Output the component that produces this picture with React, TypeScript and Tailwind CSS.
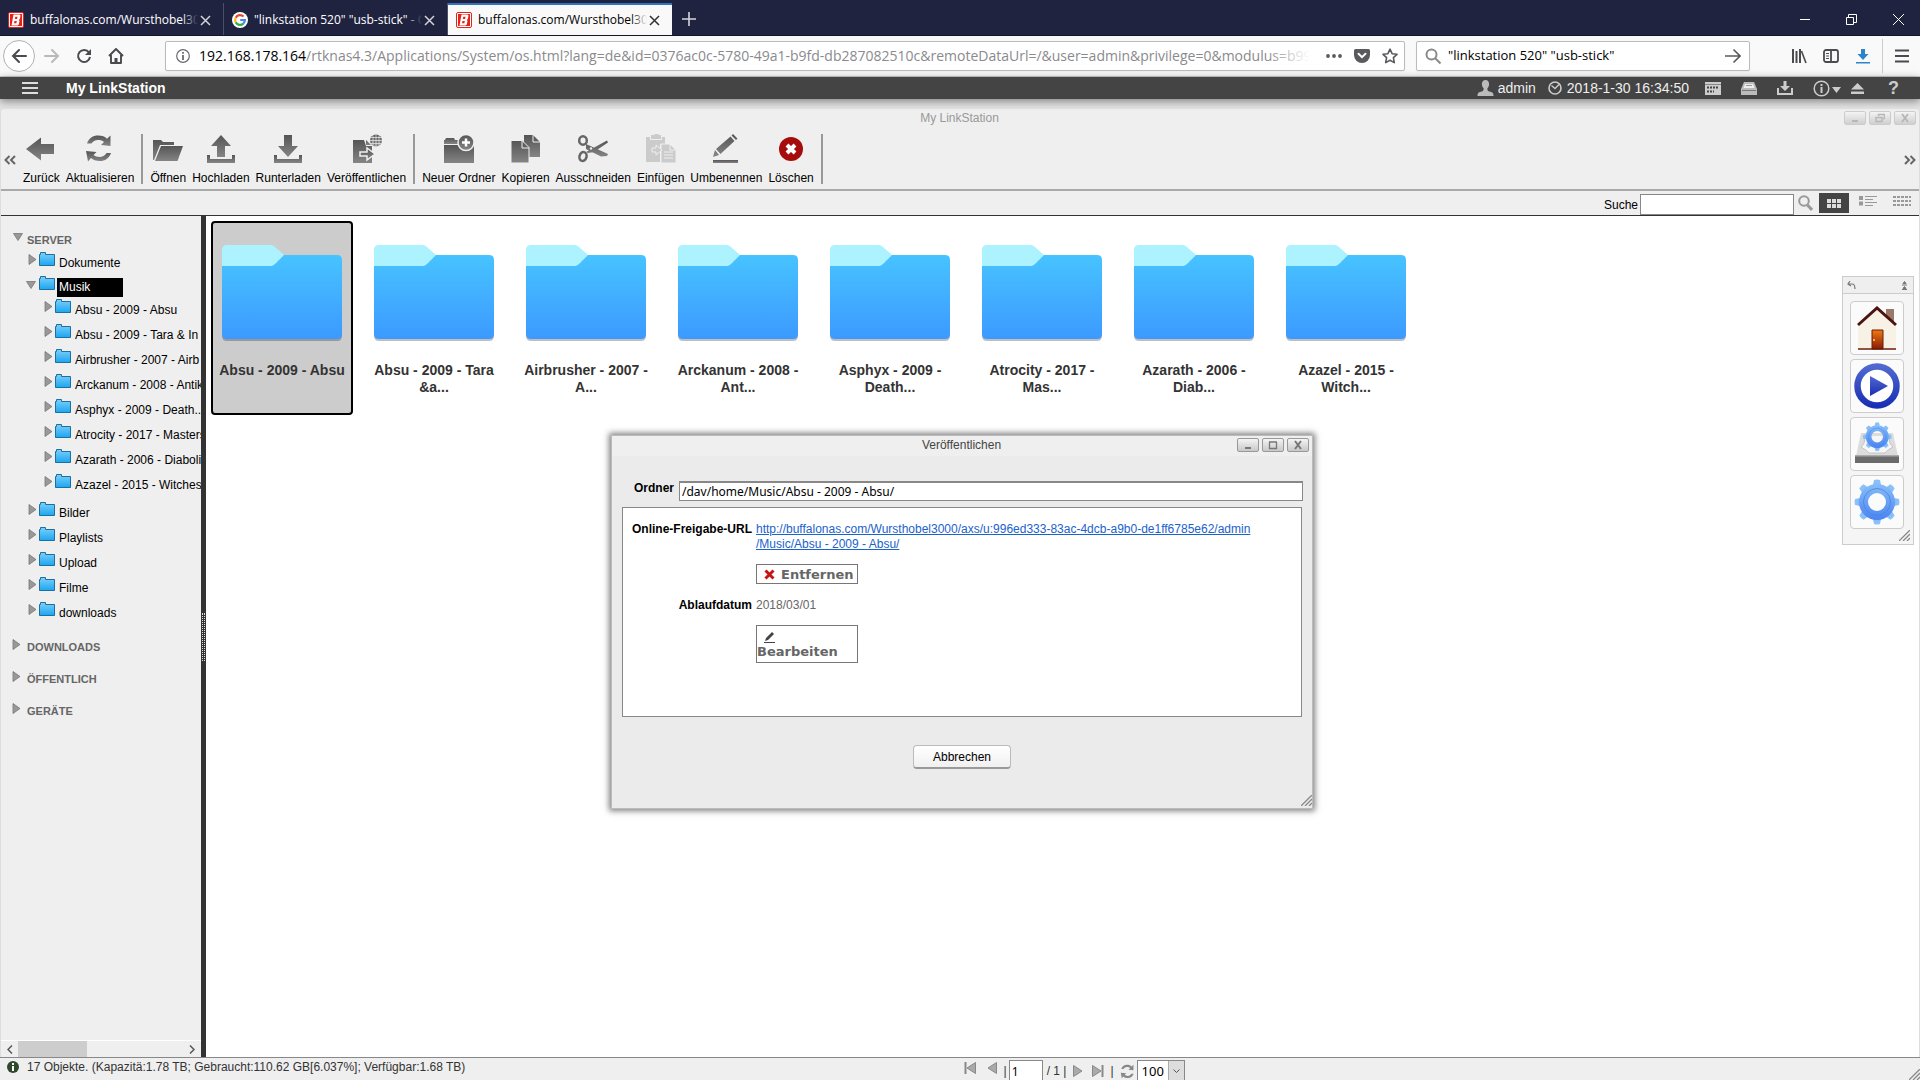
import { useState } from 'react'
import type { ReactNode } from 'react'
import { clsx } from 'clsx'

const URL_HOST = '192.168.178.164'
const URL_PATH = '/rtknas4.3/Applications/System/os.html?lang=de&id=0376ac0c-5780-49a1-b9fd-db287082510c&remoteDataUrl=/&user=admin&privilege=0&modulus=b992'

const ORDNER = [
  ['Absu - 2009 - Absu'],
  ['Absu - 2009 - Tara', '&a...'],
  ['Airbrusher - 2007 -', 'A...'],
  ['Arckanum - 2008 -', 'Ant...'],
  ['Asphyx - 2009 -', 'Death...'],
  ['Atrocity - 2017 -', 'Mas...'],
  ['Azarath - 2006 -', 'Diab...'],
  ['Azazel - 2015 -', 'Witch...'],
]

const MUSIK = [
  'Absu - 2009 - Absu',
  'Absu - 2009 - Tara & In',
  'Airbrusher - 2007 - Airb',
  'Arckanum - 2008 - Antik',
  'Asphyx - 2009 - Death...',
  'Atrocity - 2017 - Masters',
  'Azarath - 2006 - Diaboli',
  'Azazel - 2015 - Witches',
]

const FREIGABEN = ['Bilder', 'Playlists', 'Upload', 'Filme', 'downloads']

/* ---------- Browser ---------- */

function BuffaloIcon() {
  return (
    <svg width="16" height="16" viewBox="0 0 16 16" className="shrink-0">
      <rect x="0.5" y="0.5" width="15" height="15" rx="1.5" fill="#fff" stroke="#e2231a"/>
      <rect x="2" y="2" width="12" height="12" fill="#e2231a"/>
      <path d="M5.500 2.500h6l1 1-.7 3.500-1 1 .7 1-.7 3.500-1.300 1H3.500z" fill="#fff"/>
      <path d="M7.300 4.800h2.200l-.4 2.200H6.900zM6.500 9h2.300l-.4 2.300H6z" fill="#e2231a"/>
    </svg>
  )
}

function GoogleIcon() {
  return (
    <svg width="16" height="16" viewBox="0 0 16 16" className="shrink-0">
      <circle cx="8" cy="8" r="8" fill="#fff"/>
      <g fill="none" strokeWidth="2.200">
        <path d="M11.500 4.600A4.900 4.900 0 0 0 3.700 5.700" stroke="#ea4335"/>
        <path d="M3.700 5.700a4.900 4.900 0 0 0 0 4.600" stroke="#fbbc05"/>
        <path d="M3.700 10.300a4.900 4.900 0 0 0 7.600 1.300" stroke="#34a853"/>
        <path d="M11.300 11.600A4.900 4.900 0 0 0 12.900 8H8.200" stroke="#4285f4"/>
      </g>
    </svg>
  )
}

function BrowserTab({ icon, title, active }: { icon: ReactNode; title: string; active?: boolean }) {
  return (
    <div className={clsx('flex items-center w-56 pl-2 pr-2.5',
      active ? 'bg-[#f9f9fa] text-black border-t-2 border-[#2f74c0]' : 'pt-0.5 text-white border-r border-[#4d4f66]')}>
      {icon}
      <span className="relative flex-1 min-w-0 ml-1.5 overflow-hidden whitespace-nowrap text-xs leading-5">
        {title}
        <span className={clsx('absolute inset-y-0 right-0 w-4 bg-linear-to-r from-transparent', active ? 'to-[#f9f9fa]' : 'to-[#202340]')}/>
      </span>
      <button aria-label="Tab schließen" className="p-0.5">
        <svg width="11" height="11" viewBox="0 0 11 11" stroke="currentColor" strokeWidth="1.500" opacity=".8"><path d="M1 1l9 9M10 1l-9 9"/></svg>
      </button>
    </div>
  )
}

function BrowserTabs() {
  return (
    <div className="flex items-stretch h-9 pt-[3px] bg-[#202340] border-b border-[#13152c] shrink-0">
      <BrowserTab icon={<BuffaloIcon/>} title="buffalonas.com/Wursthobel300"/>
      <BrowserTab icon={<GoogleIcon/>} title={'"linkstation 520" "usb-stick" - G'}/>
      <BrowserTab icon={<BuffaloIcon/>} title="buffalonas.com/Wursthobel300" active/>
      <button aria-label="Neuer Tab" className="px-2.5">
        <svg width="14" height="14" viewBox="0 0 14 14" stroke="#d5d5dc" strokeWidth="1.600"><path d="M7 0v14M0 7h14"/></svg>
      </button>
      <div className="ml-auto flex items-center gap-9 pr-4 text-white">
        <button aria-label="Minimieren"><svg width="10" height="10" stroke="currentColor"><path d="M0 5.500h10"/></svg></button>
        <button aria-label="Verkleinern">
          <svg width="11" height="11" fill="none" stroke="currentColor"><path d="M.5 3.500h7v7h-7zM2.500 3.500v-3h8v8h-3"/></svg>
        </button>
        <button aria-label="Schließen"><svg width="11" height="11" stroke="currentColor"><path d="M0 0l11 11M11 0L0 11"/></svg></button>
      </div>
    </div>
  )
}

function BrowserBar() {
  return (
    <div className="flex items-center h-[41px] pl-[3px] pr-2.5 bg-[#f9f9fa] border-b border-[#ccc] shrink-0 text-[#4a4a4f]">
      <button aria-label="Zurück" className="w-8 h-8 rounded-full border border-[#b1b1b3] bg-white flex items-center justify-center">
        <svg width="16" height="16" viewBox="0 0 16 16" fill="none" stroke="currentColor" strokeWidth="2" strokeLinecap="round"><path d="M15 8H2M8 2L2 8l6 6"/></svg>
      </button>
      <button aria-label="Vor" className="ml-[9px]">
        <svg width="16" height="16" viewBox="0 0 16 16" fill="none" stroke="#b9b9bb" strokeWidth="2" strokeLinecap="round"><path d="M1 8h13M8 2l6 6-6 6"/></svg>
      </button>
      <button aria-label="Neu laden" className="ml-4">
        <svg width="16" height="16" viewBox="0 0 16 16" fill="none" stroke="currentColor" strokeWidth="2"><path d="M13 4.500A6 6 0 1 0 14 9"/><path d="M15 1v6H9z" fill="currentColor" stroke="none"/></svg>
      </button>
      <button aria-label="Startseite" className="ml-4">
        <svg width="16" height="16" viewBox="0 0 16 16" fill="none" stroke="currentColor" strokeWidth="1.900" strokeLinejoin="round"><path d="M1 8l7-7 7 7M3 7v8h10V7"/><path d="M6.500 10h3v5h-3z" fill="currentColor" stroke="none"/></svg>
      </button>

      <div className="ml-[41px] flex flex-1 min-w-0 items-center h-[30px] pl-2.5 pr-1.5 bg-white border border-[#bbb] rounded-xs shadow-xs">
        <svg width="14" height="14" viewBox="0 0 14 14" fill="none" stroke="#6a6a6e" className="shrink-0"><circle cx="7" cy="7" r="6.300" strokeWidth="1.200"/><path d="M7 6v5M7 3v1.700" strokeWidth="1.800"/></svg>
        <div className="relative ml-[9px] mr-4 flex-1 min-w-0 overflow-hidden whitespace-nowrap text-sm text-[#8a8a8d]">
          <span className="text-black">{URL_HOST}</span>{URL_PATH}
          <span className="absolute inset-y-0 right-0 w-11 bg-linear-to-r from-transparent to-white"/>
        </div>
        <div className="flex items-center gap-3 shrink-0">
          <svg width="16" height="16" viewBox="0 0 16 16" fill="#5a5a5e"><circle cx="2" cy="8" r="1.900"/><circle cx="8" cy="8" r="1.900"/><circle cx="14" cy="8" r="1.900"/></svg>
          <svg width="16" height="16" viewBox="0 0 16 16"><path d="M1.500 1h13q1.500 0 1.500 1.500V7a8 8 0 0 1-16 0V2.500Q0 1 1.500 1z" fill="#5a5a5e"/><path d="M4.500 5.800L8 9.200l3.500-3.400" fill="none" stroke="#fff" strokeWidth="2" strokeLinecap="round"/></svg>
          <svg width="16" height="16" viewBox="0 0 16 16" fill="none" stroke="#5a5a5e" strokeWidth="1.600" strokeLinejoin="round"><path d="M8 1.200l2.100 4.500 4.900.6-3.600 3.400.9 4.900L8 12.200l-4.300 2.400.9-4.900L1 6.300l4.900-.6z"/></svg>
        </div>
      </div>

      <div className="ml-[11px] flex w-[334px] items-center h-[30px] px-2 bg-white border border-[#bbb] rounded-xs shadow-xs">
        <svg width="16" height="16" viewBox="0 0 16 16" fill="none" stroke="#8a8a8d" strokeWidth="2" className="shrink-0"><circle cx="6.500" cy="6.500" r="5"/><path d="M10 10l5.500 5.500"/></svg>
        <input aria-label="Websuche" defaultValue={'"linkstation 520" "usb-stick"'} className="ml-[7px] flex-1 min-w-0 text-[13px] text-black outline-none"/>
        <svg width="16" height="16" viewBox="0 0 16 16" fill="none" stroke="#5a5a5e" strokeWidth="1.600"><path d="M0 8h15M8.500 1.500L15 8l-6.500 6.500"/></svg>
      </div>

      <div className="ml-[41px] flex items-center gap-4">
        <svg width="16" height="16" viewBox="0 0 16 16" fill="none" stroke="currentColor" strokeWidth="2"><path d="M2 1v14M5.500 3v12M9 1v14"/><path d="M10.500 3L15 15" strokeWidth="1.600"/></svg>
        <svg width="16" height="16" viewBox="0 0 16 16" fill="none" stroke="currentColor" strokeWidth="1.800"><rect x="1" y="2" width="14" height="12" rx="2"/><path d="M8 2v12"/><path d="M3 5.500h3M3 8h3M3 10.500h3" strokeWidth="1"/></svg>
        <svg width="16" height="16" viewBox="0 0 16 16" fill="#2d84c8"><path d="M6 1h4v5h3.500L8 12 2.500 6H6zM1 14h14v1.500H1z"/></svg>
        <svg width="28" height="34" viewBox="0 0 28 34" fill="none" className="-ml-[5px]"><path d="M.5 0v34" stroke="#ccc"/><path d="M13 11.500h14M13 17h14M13 22.500h14" stroke="#4a4a4f" strokeWidth="2"/></svg>
      </div>
    </div>
  )
}

/* ---------- Kopfzeile der NAS ---------- */

function SystemBar() {
  return (
    <header className="relative z-10 flex items-center h-[22px] pl-[22px] pr-[21px] bg-[#444] text-[#e8e8e8] text-sm leading-5 shrink-0 shadow-[0_2px_8px_rgba(0,0,0,0.45)]">
      <button aria-label="Menü"><svg width="16" height="12" stroke="#ddd" strokeWidth="2"><path d="M0 1h16M0 6h16M0 11h16"/></svg></button>
      <h1 className="ml-7 font-bold text-white">My LinkStation</h1>
      <div className="ml-auto flex items-center text-[#eee]">
        <svg width="17" height="16" viewBox="0 0 17 16" fill="#bbb"><path d="M8.500 0c2.400 0 3.600 1.700 3.600 4s-1 3.600-1.800 4.500c0 2.500 1 2.800 3.700 3.500 2 .5 2.500 1.500 2.500 4H.5c0-2.500.5-3.500 2.500-4 2.700-.7 3.700-1 3.700-3.500C5.900 7.600 4.900 6.300 4.900 4S6.100 0 8.500 0z"/></svg>
        <span className="ml-1">admin</span>
        <svg width="14" height="14" viewBox="0 0 14 14" fill="none" stroke="#ccc" strokeWidth="1.600" className="ml-3"><circle cx="7" cy="7" r="6"/><path d="M3.500 4.500L7 7.500 11 3.500" strokeWidth="1.400"/></svg>
        <span className="ml-[5px]">2018-1-30 16:34:50</span>
        <svg width="16" height="13" viewBox="0 0 16 13" className="ml-4"><path d="M0 0h16v13H0z" fill="#ccc"/><path d="M0 2.500h16" stroke="#888"/><path d="M2 5.500h12M2 9.500h7" stroke="#444" strokeWidth="2" strokeDasharray="2 1"/></svg>
        <svg width="16" height="13" viewBox="0 0 16 13" className="ml-5"><path d="M3 0h10l3 7v6H0V7z" fill="#bbb"/><path d="M4 2h8l1.500 4h-11z" fill="#eee"/><path d="M1 8.500h14" stroke="#777"/><path d="M5 3.500h6" stroke="#999"/></svg>
        <svg width="16" height="14" viewBox="0 0 16 14" className="ml-5" fill="#ccc"><path d="M6.500 0h3v5H13L8 10 3 5h3.500zM0 7h2v5h12V7h2v7H0z"/></svg>
        <svg width="17" height="17" viewBox="0 0 17 17" fill="none" stroke="#ccc" className="ml-5"><circle cx="8.500" cy="8.500" r="7.300" strokeWidth="1.500"/><path d="M8.500 7v6M8.500 4v2" strokeWidth="2"/></svg>
        <svg width="9" height="6" className="ml-0.5 mt-1" fill="#ccc"><path d="M0 0h9L4.500 6z"/></svg>
        <svg width="13" height="11" viewBox="0 0 13 11" fill="#ccc" className="ml-2.5"><path d="M6.500 0L13 6.500H0zM0 8.500h13V11H0z"/></svg>
        <span className="ml-6 text-lg font-bold text-[#ccc]">?</span>
      </div>
    </header>
  )
}

/* ---------- Symbolleiste ---------- */

function ToolIcon({ children, fill = 'url(#toolGrad)' }: { children: ReactNode; fill?: string }) {
  return <svg width="30" height="30" viewBox="0 0 30 30" fill={fill} className="shrink-0">{children}</svg>
}

function RefreshShape() {
  return (
    <>
      <path d="M2 9.500C4 4 8 1.500 13 1.500c4 0 7 1 9 3.200L25.500 1.500V12L16 11l3-3c-1.500-1.500-3.500-2-6-2-3 0-5 1.500-6.500 3.500z"/>
      <path d="M26 19c-2 5.500-6 8-11 8-4 0-7-1-9-3L3 27.500 1 17l10.500 1-3 3c1.500 1.300 3.500 2 6 2 3 0 5.500-1.500 7-4z"/>
    </>
  )
}

const WERKZEUGE: { label: string; icon: ReactNode; disabled?: boolean }[][] = [
  [
    { label: 'Zurück', icon: <ToolIcon><path d="M0 15L15 3.500V10h13v10H15v6.500z"/></ToolIcon> },
    { label: 'Aktualisieren', icon: <ToolIcon><RefreshShape/></ToolIcon> },
  ],
  [
    { label: 'Öffnen', icon: <ToolIcon><path d="M0 6h8l2 2h11v3H7L1 26H0z"/><path d="M8 12h22l-5.500 15H2z"/></ToolIcon> },
    { label: 'Hochladen', icon: <ToolIcon><path d="M15 1l10 11h-6v11h-8V12H5z"/><path d="M1 21h3v4h22v-4h3v8H1z"/></ToolIcon> },
    { label: 'Runterladen', icon: <ToolIcon><path d="M11 1h8v11h6L15 23 5 12h6z"/><path d="M1 21h3v4h22v-4h3v8H1z"/></ToolIcon> },
    { label: 'Veröffentlichen', icon: (
      <ToolIcon>
        <path d="M1 6h11l2 6h6v17H1z"/><path d="M14 6l5 5h-5z"/>
        <path d="M8 18h7v-4l8 6-8 6v-4H8z" stroke="#efefef" strokeWidth="1.500"/>
        <circle cx="24" cy="6.500" r="6"/>
        <path d="M18 6.500h12M24 .5v12M19 3.500h10M19 9.500h10M21 1.500v10M27 1.500v10" stroke="#efefef" strokeWidth=".7"/>
      </ToolIcon>
    ) },
  ],
  [
    { label: 'Neuer Ordner', icon: (
      <ToolIcon>
        <path d="M0 6h1l1-2h8l1 2h3v4H0z"/><path d="M0 11h30v18H0z"/>
        <circle cx="22" cy="8.500" r="8" stroke="#efefef" strokeWidth="1.500"/><path d="M22 4.500v8M18 8.500h8" stroke="#fff" strokeWidth="2.500"/>
      </ToolIcon>
    ) },
    { label: 'Kopieren', icon: (
      <ToolIcon>
        <path d="M13 1h9l7 7v15H13z"/><path d="M22 1v7h7" fill="none" stroke="#efefef"/>
        <path d="M0 6.500h11l7 7V29H0z" stroke="#efefef"/><path d="M11 7v7h7" fill="none" stroke="#efefef"/>
      </ToolIcon>
    ) },
    { label: 'Ausschneiden', icon: (
      <ToolIcon>
        <path d="M8 10L30 20l-1 2-6 .5L8 15zM8 18L29 6.500l1 2L16 18l-6 1z"/>
        <g fill="none" stroke="#666" strokeWidth="2.500"><ellipse cx="5" cy="6.500" rx="3.800" ry="4.300"/><ellipse cx="5" cy="22.500" rx="3.500" ry="4.500" transform="rotate(15 5 22.500)"/></g>
        <circle cx="13" cy="14.500" r="1.200" fill="#efefef"/>
      </ToolIcon>
    ) },
    { label: 'Einfügen', disabled: true, icon: (
      <ToolIcon fill="#cbcbcb">
        <path d="M0 3h4v3h12V3h3v7h-5v18H0z"/><path d="M5 1h3l1-1h3l1 1h2v4H5z"/>
        <path d="M15 10h9l6 6v13H15z" stroke="#efefef"/><path d="M24 10v6h6M18 18h9M18 21h9M18 24h9" fill="none" stroke="#efefef"/>
        <path d="M6 14h4v-3l6 5-6 5v-3H6z" stroke="#efefef"/>
      </ToolIcon>
    ) },
    { label: 'Umbenennen', icon: (
      <ToolIcon>
        <path d="M2 23l2-7 4 5zM5 15L19.500 2.500l4 4.500L9.500 20zM20.500 1.500L22 0l4.500 4.500L25 6z"/><path d="M2 26h25v3H2z"/>
      </ToolIcon>
    ) },
    { label: 'Löschen', icon: (
      <ToolIcon fill="#a50d0d"><circle cx="15" cy="15" r="12"/><path d="M11 11l8 8M19 11l-8 8" stroke="#fff" strokeWidth="4"/></ToolIcon>
    ) },
  ],
]

function Chevrons({ label, right }: { label: string; right?: boolean }) {
  return (
    <button aria-label={label} className="mt-[21px]">
      <svg width="12" height="10" viewBox="0 0 12 10" fill="none" stroke="#666" strokeWidth="2" className={clsx(right && 'rotate-180')}>
        <path d="M5.500 1L1.500 5l4 4M11 1L7 5l4 4"/>
      </svg>
    </button>
  )
}

function Toolbar() {
  return (
    <div className="flex items-start justify-between h-16 px-[3px] pt-[7px] border-b-2 border-[#a9a9a9] text-xs">
      <div className="flex items-start">
        <Chevrons label="Nach links"/>
        <div className="flex ml-1">
          {WERKZEUGE.map((gruppe, i) => (
            <div key={i} className="flex border-r-2 border-[#999] h-[50px] pr-1 mr-1">
              {gruppe.map(w => (
                <button key={w.label} disabled={w.disabled} className="flex flex-col items-center px-[3px] text-black whitespace-nowrap">
                  {w.icon}
                  <span className="mt-1.5 leading-4">{w.label}</span>
                </button>
              ))}
            </div>
          ))}
        </div>
      </div>
      <Chevrons label="Nach rechts" right/>
    </div>
  )
}

function WindowButton({ label, faded, children }: { label: string; faded?: boolean; children: ReactNode }) {
  return (
    <button aria-label={label}
      className={clsx('flex items-center justify-center w-[22px] h-[14px] border bg-linear-to-b from-[#f5f5f5] to-[#c8c8c8] rounded-xs',
        faded ? 'border-[#c4c4c4] opacity-80' : 'border-[#999]')}>
      <svg width="10" height="10" viewBox="0 0 10 10" fill="none" stroke={faded ? '#aaa' : '#777'} strokeWidth="2">{children}</svg>
    </button>
  )
}

function SearchBar() {
  return (
    <div className="flex items-center justify-end h-[25px] pr-2 border-b border-[#333] text-xs">
      <label htmlFor="suche" className="mt-1 mr-0.5 text-black">Suche</label>
      <input id="suche" className="w-[154px] h-[21px] mt-0.5 px-1 bg-white border border-[#888]"/>
      <svg width="15" height="16" viewBox="0 0 15 16" fill="none" stroke="#999" strokeWidth="2" className="ml-1"><circle cx="6" cy="6" r="4.800"/><path d="M9.500 10l4.500 5" strokeWidth="3"/></svg>
      <button aria-label="Symbole" className="flex items-center justify-center ml-1.5 w-[30px] h-5 bg-[#444]">
        <svg width="14" height="9" fill="#ddd"><path d="M0 0h4v4H0zM5 0h4v4H5zM10 0h4v4h-4zM0 5h4v4H0zM5 5h4v4H5zM10 5h4v4h-4z"/></svg>
      </button>
      <button aria-label="Liste" className="ml-2.5 mb-1">
        <svg width="18" height="10" stroke="#999"><path d="M0 2h4M0 7.500h4" strokeWidth="4"/><path d="M6 .5h12M6 3.500h8M6 6.500h12M6 9.500h8"/></svg>
      </button>
      <button aria-label="Details" className="ml-4 mb-1">
        <svg width="18" height="10" stroke="#999" strokeWidth="2" strokeDasharray="3 1"><path d="M0 1h18M0 5h18M0 9h18"/></svg>
      </button>
    </div>
  )
}

/* ---------- Baum ---------- */

function Arrow({ open }: { open?: boolean }) {
  return (
    <svg width="10" height="11" viewBox="0 0 10 11" fill="#999" stroke="#777" strokeWidth=".8" className="shrink-0 mb-1.5">
      {open ? <path d="M.5 1.500h9l-4.500 7z"/> : <path d="M1 .5l7 5-7 5z"/>}
    </svg>
  )
}

function SmallFolder() {
  return (
    <svg width="16" height="15" viewBox="0 0 16 15" className="shrink-0 mb-1.5">
      <path d="M.5 13.500v-11h1v-2h5v2h9v11z" fill="url(#folderSmall)" stroke="#1c6f9e"/>
    </svg>
  )
}

function TreeItem({ label, child }: { label: string; child?: boolean }) {
  return (
    <li className={clsx('flex items-center h-[25px] whitespace-nowrap', child ? 'pl-[43px]' : 'pl-[27px]')}>
      <Arrow/>
      <span className="ml-px"><SmallFolder/></span>
      <span className="ml-1">{label}</span>
    </li>
  )
}

function Tree() {
  return (
    <aside className="flex flex-col w-[200px] shrink-0 bg-[#efefef] text-xs text-black">
      <div className="flex-1 overflow-hidden pt-3.5">
        <div className="flex items-center h-5 pl-3 gap-1 text-[11px] font-bold text-[#666]"><Arrow open/>SERVER</div>
        <ul>
          <TreeItem label="Dokumente"/>
          <li>
            <div className="flex items-end h-[22px] pl-[25px]">
              <Arrow open/>
              <span className="ml-[3px]"><SmallFolder/></span>
              <span className="ml-0.5 pl-0.5 w-[66px] h-[19px] leading-[19px] bg-black text-white">Musik</span>
            </div>
            <ul className="pb-[3px]">
              {MUSIK.map(m => <TreeItem key={m} label={m} child/>)}
            </ul>
          </li>
          {FREIGABEN.map(f => <TreeItem key={f} label={f}/>)}
        </ul>
        <div className="pt-1.5 text-[11px] font-bold text-[#666]">
          {['DOWNLOADS', 'ÖFFENTLICH', 'GERÄTE'].map(s => (
            <div key={s} className="flex items-center h-8 pl-[11px] gap-[5px]"><Arrow/>{s}</div>
          ))}
        </div>
      </div>
      <div className="flex items-center h-[17px] border-t border-white px-1.5 text-[#555]">
        <svg width="6" height="9" fill="none" stroke="currentColor" strokeWidth="1.500"><path d="M5 .5l-4 4 4 4"/></svg>
        <div className="ml-[5px] w-[69px] h-full bg-[#cdcdcd]"/>
        <svg width="6" height="9" fill="none" stroke="currentColor" strokeWidth="1.500" className="ml-auto"><path d="M1 .5l4 4-4 4"/></svg>
      </div>
    </aside>
  )
}

/* ---------- Ordneransicht ---------- */

function BigFolder() {
  return (
    <svg width="122" height="98" viewBox="0 0 122 98">
      <path d="M1 20h120v71q0 5-5 5H6q-5 0-5-5z" fill="#000" opacity=".25" transform="translate(0 1)"/>
      <path d="M1 20l50-9h65q5 0 5 5v74q0 5-5 5H6q-5 0-5-5z" fill="url(#folderBig)"/>
      <path d="M1 6q0-5 5-5h44q2 0 4 2l9 8-9 9q-2 2-4 2H1z" fill="#adf2ff"/>
    </svg>
  )
}

function FolderGrid({ selected, onSelect }: { selected: number; onSelect: (i: number) => void }) {
  return (
    <div className="flex flex-wrap content-start gap-2.5 p-[5px]">
      {ORDNER.map((zeilen, i) => (
        <button key={zeilen.join(' ')} onClick={() => onSelect(i)}
          className={clsx('flex flex-col items-center w-[142px] h-[194px] pt-[21px] border-2 rounded-sm text-sm leading-[17px] font-bold text-[#333]',
            i === selected ? 'bg-[#ccc] border-black' : 'border-transparent')}>
          <BigFolder/>
          <span className="mt-5 whitespace-nowrap">
            {zeilen.map(z => <span key={z} className="block">{z}</span>)}
          </span>
        </button>
      ))}
    </div>
  )
}

/* ---------- Dialog ---------- */

function Grip() {
  return <svg width="11" height="11" stroke="#888" strokeWidth="1.300"><path d="M0 11L11 0M4 11l7-7M8 11l3-3"/></svg>
}

function PublishDialog() {
  return (
    <section role="dialog" aria-label="Veröffentlichen"
      className="absolute left-[405px] top-[219px] w-[702px] h-[374px] bg-[#ebebeb] border border-[#bbb] text-xs text-black shadow-[0_0_6px_2px_rgba(0,0,0,0.5)]">
      <div className="flex items-start h-5 pt-px pl-1 pr-[3px] bg-[#efefef]">
        <h2 className="flex-1 pl-[70px] text-center leading-4 text-[#444]">Veröffentlichen</h2>
        <div className="flex gap-[3px] pt-px">
          <WindowButton label="Minimieren"><path d="M2 8h6"/></WindowButton>
          <WindowButton label="Maximieren"><path d="M1 2h8M1.500 2v7M8.500 2v7M1 8.500h8" strokeWidth="1.300"/></WindowButton>
          <WindowButton label="Schließen"><path d="M2 1l6 8M8 1L2 9"/></WindowButton>
        </div>
      </div>
      <div className="flex mt-[25px] pl-[22px] pr-[9px]">
        <label htmlFor="ordner" className="w-[45px] font-bold leading-[14px]">Ordner</label>
        <input id="ordner" readOnly value="/dav/home/Music/Absu - 2009 - Absu/"
          className="flex-1 h-5 px-0.5 bg-white border border-[#888] border-t-2 font-['Noto_Sans','Open_Sans',sans-serif] outline-none"/>
      </div>
      <div className="mt-1.5 mx-2.5 h-[210px] pt-3.5 bg-white border border-[#888]">
        <dl className="grid grid-cols-[129px_1fr] gap-x-1 leading-[15px]">
          <dt className="text-right font-bold">Online-Freigabe-URL</dt>
          <dd>
            <a href="#freigabe" className="text-[#1a62cc] underline">
              http://buffalonas.com/Wursthobel3000/axs/u:996ed333-83ac-4dcb-a9b0-de1ff6785e62/admin<br/>/Music/Absu - 2009 - Absu/
            </a>
            <button className="flex items-center mt-3 w-[102px] h-5 pl-[7px] gap-1.5 border border-[#777] font-['DejaVu_Sans',sans-serif] text-[13px] font-bold text-[#666]">
              <svg width="11" height="11" stroke="#c51616" strokeWidth="3"><path d="M1.500 1.500l8 8M9.500 1.500l-8 8"/></svg>
              Entfernen
            </button>
          </dd>
          <dt className="mt-3.5 text-right font-bold">Ablaufdatum</dt>
          <dd className="mt-3.5 text-[#666]">
            2018/03/01
            <button className="block mt-3 w-[102px] h-[38px] pt-px border border-[#777] text-left font-['DejaVu_Sans',sans-serif] text-[13px] leading-4 font-bold text-[#666]">
              <svg width="11" height="11" className="ml-[7px] mt-0.5 mb-px" fill="#444"><path d="M1 9l1-3L8 0l2 2-6 6zM0 10h11v1H0z"/></svg>
              Bearbeiten
            </button>
          </dd>
        </dl>
      </div>
      <div className="flex justify-center mt-7">
        <button className="w-[98px] h-6 bg-linear-to-b from-white to-[#f0f0f0] border border-[#bbb] border-b-2 border-b-[#999] rounded-sm">Abbrechen</button>
      </div>
      <div className="absolute right-0 bottom-0.5"><Grip/></div>
    </section>
  )
}

/* ---------- Dock ---------- */

function Gear({ id }: { id: string }) {
  const zaehne = [0, 45, 90, 135, 180, 225, 270, 315]
  return (
    <g fill={`url(#${id})`}>
      {zaehne.map(w => <path key={w} d="M19 6L20 1q3-1 6 0l1 5z" transform={`rotate(${w} 23 23)`}/>)}
      <path fillRule="evenodd" d="M23 5a18 18 0 1 0 0 36 18 18 0 1 0 0-36zM23 14a9 9 0 1 1 0 18 9 9 0 1 1 0-18z"/>
      <circle cx="23" cy="23" r="13.500" fill="none" stroke="#4b83dd" strokeWidth=".8"/>
    </g>
  )
}

function Dock() {
  const box = 'flex items-center justify-center w-[54px] h-[54px] bg-[#fbfbfb] border border-[#ccc] rounded-sm'
  return (
    <nav aria-label="Dock" className="absolute right-[5px] top-[60px] flex flex-col w-[72px] h-[269px] bg-[#f5f5f5] border border-[#ccc]">
      <div className="flex items-center justify-between h-[17px] px-1 bg-[#efefef] border-b border-[#ccc]">
        <svg width="9" height="9" fill="none" stroke="#777" strokeWidth="1.200"><path d="M3 0L1 3l3 2M1 3h4q3 0 3 5"/></svg>
        <svg width="9" height="9" stroke="#777" fill="#777"><path d="M4.500 .5L6 2.500H3zM4.500 5.500L6 7.500H3z"/><path d="M2 4h5M2 8.500h5"/></svg>
      </div>
      <div className="flex flex-col items-center gap-1 pt-[7px] pr-0.5">
        <button aria-label="Start" className={box}>
          <svg width="40" height="44" viewBox="0 0 40 44">
            <path d="M29 3h8v15l-8-7z" fill="#9b7767"/>
            <path d="M1 20L20 3l19 17v23H1z" fill="#f7f1e6"/>
            <path d="M1 19L20 2l19 17" fill="none" stroke="#4b1410" strokeWidth="3"/>
            <path d="M15 24h11v19H15z" fill="url(#door)" stroke="#6b1d08"/><path d="M1 43h38" stroke="#6b1d08" strokeWidth="1.500"/>
            <circle cx="17" cy="34" r="1" fill="#ffd27a"/>
          </svg>
        </button>
        <button aria-label="Wiedergabe" className={box}>
          <svg width="46" height="46" viewBox="0 0 46 46"><circle cx="23" cy="23" r="19.500" fill="#fff" stroke="url(#play)" strokeWidth="6.500"/><path d="M16 13l18 10-18 10z" fill="url(#play)"/></svg>
        </button>
        <button aria-label="Laufwerke" className={box}>
          <svg width="46" height="46" viewBox="0 0 46 46">
            <path d="M7 12h32l5 23H2z" fill="#dcdcdc"/><path d="M9 15q4 6-2 11 7 4 8 6h16q2-3 8-6-6-5-2-11" fill="#f6f6f6" stroke="#c4c4c4"/>
            <path d="M1 34h44v8H1z" fill="#6b6b6b"/><path d="M1 34h44v1.500H1z" fill="#aaa"/>
            <g transform="translate(8.500 1) scale(.64)"><Gear id="gear"/></g>
          </svg>
        </button>
        <button aria-label="Einstellungen" className={box}>
          <svg width="46" height="46" viewBox="0 0 46 46"><Gear id="gear"/></svg>
        </button>
      </div>
      <div className="absolute right-[3px] bottom-[3px]"><Grip/></div>
    </nav>
  )
}

/* ---------- Statuszeile ---------- */

function PageArrow({ label, dir, bar }: { label: string; dir: 'left' | 'right'; bar?: boolean }) {
  return (
    <button aria-label={label}>
      <svg width="13" height="12" viewBox="0 0 13 12" fill="#aaa" stroke="#888" className={clsx(dir === 'right' && 'rotate-180')}>
        <path d="M11.500 .5v11L3 6z"/>{bar && <path d="M1.500 0v12" strokeWidth="2"/>}
      </svg>
    </button>
  )
}

function StatusBar() {
  return (
    <footer className="flex h-[23px] pl-[7px] bg-[#efefef] border-t border-[#888] text-xs text-[#333] shrink-0 overflow-hidden">
      <div className="flex w-1/2 shrink-0 items-center gap-2 h-[18px]">
        <svg width="12" height="12"><circle cx="6" cy="6" r="6" fill="#2d4a2d"/><path d="M6 5v5M6 2v2" stroke="#fff" strokeWidth="2"/></svg>
        17 Objekte. (Kapazitä:1.78 TB; Gebraucht:110.62 GB[6.037%]; Verfügbar:1.68 TB)
      </div>
      <div className="flex items-center h-6 pt-0.5 gap-1.5">
        <div className="flex gap-2 pb-1.5">
          <PageArrow label="Erste Seite" dir="left" bar/>
          <PageArrow label="Vorherige Seite" dir="left"/>
        </div>
        <span>|</span>
        <input aria-label="Seite" defaultValue="1" className="w-[34px] h-[22px] -ml-1 px-0.5 bg-white border border-[#888] font-['Noto_Sans',sans-serif] text-black"/>
        <span className="-ml-0.5">/ 1 |</span>
        <PageArrow label="Nächste Seite" dir="right"/>
        <PageArrow label="Letzte Seite" dir="right" bar/>
        <span>|</span>
        <svg width="15" height="15" viewBox="0 0 28 29" fill="#888"><RefreshShape/></svg>
        <div className="relative -ml-1">
          <select aria-label="Einträge pro Seite" defaultValue="100" className="block appearance-none w-12 h-[22px] pl-1 bg-white border border-[#888] font-['Noto_Sans',sans-serif] text-[13px] leading-5 text-black">
            <option>50</option>
            <option>100</option>
          </select>
          <span className="absolute right-px inset-y-px w-4 flex items-center justify-center bg-[#ddd] border-l border-[#aaa] pointer-events-none">
            <svg width="7" height="5" fill="none" stroke="#555"><path d="M.5 .5l3 3 3-3"/></svg>
          </span>
        </div>
      </div>
      <div className="flex-1 flex justify-end items-end"><Grip/></div>
    </footer>
  )
}

function Gradients() {
  return (
    <svg width="0" height="0" className="absolute">
      <defs>
        <linearGradient id="toolGrad" x1="0" y1="0" x2="0" y2="1"><stop stopColor="#555"/><stop offset="1" stopColor="#858585"/></linearGradient>
        <linearGradient id="folderBig" x1="0" y1="0" x2="0" y2="1"><stop stopColor="#47c3ff"/><stop offset="1" stopColor="#3c99ff"/></linearGradient>
        <linearGradient id="folderSmall" x1="0" y1="0" x2="0" y2="1"><stop stopColor="#7fd0fa"/><stop offset="1" stopColor="#1ba6f2"/></linearGradient>
        <linearGradient id="play" x1="0" y1="0" x2="0" y2="1"><stop stopColor="#5068d0"/><stop offset="1" stopColor="#1a2fb4"/></linearGradient>
        <linearGradient id="door" x1="0" y1="0" x2="0" y2="1"><stop stopColor="#ee7a10"/><stop offset="1" stopColor="#8a1a05"/></linearGradient>
        <linearGradient id="gear" gradientUnits="userSpaceOnUse" x1="0" y1="0" x2="0" y2="46"><stop stopColor="#8ec5fa"/><stop offset="1" stopColor="#427df0"/></linearGradient>
      </defs>
    </svg>
  )
}

export default function App() {
  const [selected, setSelected] = useState(0)

  return (
    <div className="relative flex flex-col h-screen overflow-hidden bg-[#e2e2e2] font-['Liberation_Sans',Arial,sans-serif]">
      <Gradients/>
      <div className="shrink-0 font-['Open_Sans','Noto_Sans',sans-serif]">
        <BrowserTabs/>
        <BrowserBar/>
      </div>
      <SystemBar/>

      <main className="flex flex-col flex-1 min-h-0 mt-2.5 bg-[#efefef] border-l border-r border-[#ddd] rounded-t-sm">
        <div className="flex items-start h-[18px] pt-0.5 pr-[3px] text-xs">
          <h2 className="flex-1 pl-[74px] text-center leading-[14px] text-[#999]">My LinkStation</h2>
          <div className="flex gap-[3px]">
            <WindowButton label="Minimieren" faded><path d="M2 8h6"/></WindowButton>
            <WindowButton label="Verkleinern" faded><path d="M3.500 3V1.500h6v4H8M1 4.500h6v4H1z" strokeWidth="1.500"/></WindowButton>
            <WindowButton label="Schließen" faded><path d="M2 1l6 8M8 1L2 9"/></WindowButton>
          </div>
        </div>
        <Toolbar/>
        <SearchBar/>
        <div className="flex flex-1 min-h-0">
          <Tree/>
          <div className="flex items-center w-[5px] shrink-0 bg-[#333]">
            <div className="w-[3px] mx-auto h-12 border-x border-dotted border-[#ddd]"/>
          </div>
          <div className="relative flex-1 min-w-0 bg-white">
            <FolderGrid selected={selected} onSelect={setSelected}/>
            <PublishDialog/>
            <Dock/>
          </div>
        </div>
      </main>
      <StatusBar/>
    </div>
  )
}
